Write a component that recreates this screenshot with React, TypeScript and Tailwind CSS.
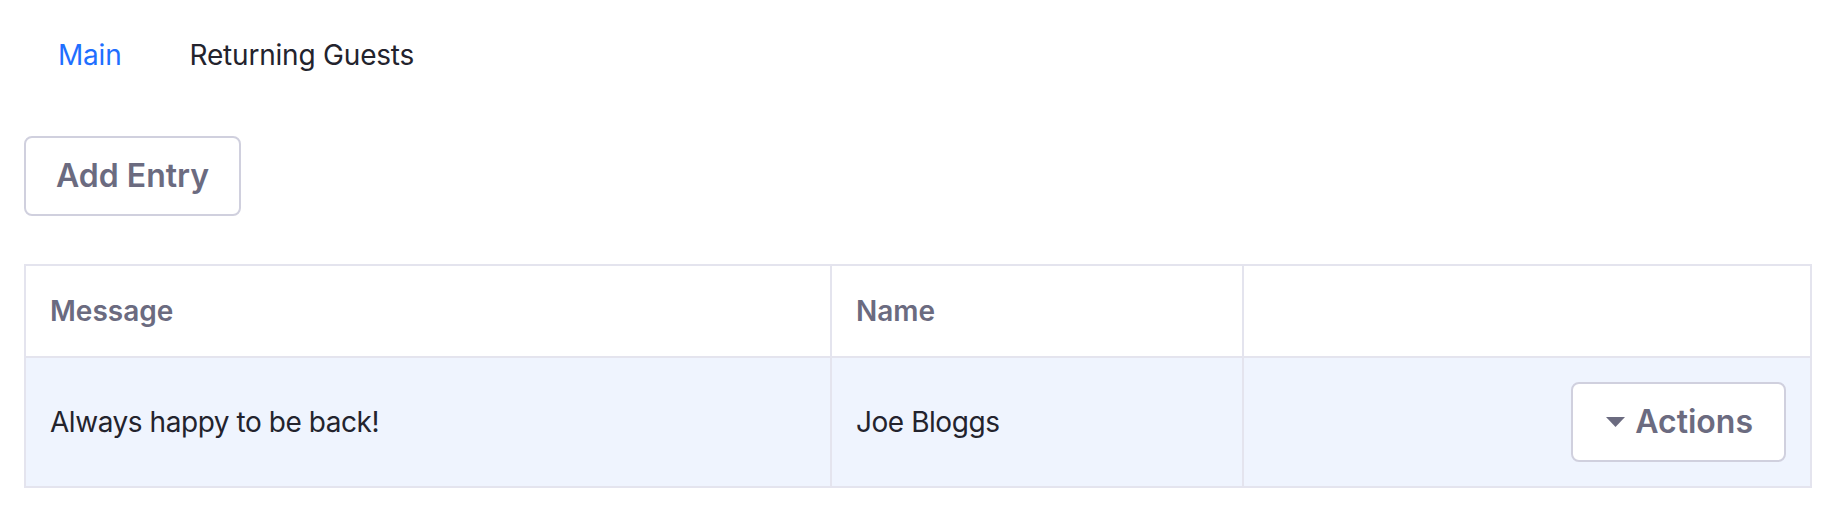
import { Fragment } from 'react'

const FONT = 'font-["Inter","Noto_Sans",sans-serif]'

const TABS = [
  { id: 'main', label: 'Main', active: true },
  { id: 'returning', label: 'Returning Guests', active: false },
]

type Entry = { message: string; name: string }

const ENTRIES: Entry[] = [{ message: 'Always happy to be back!', name: 'Joe Bloggs' }]

const BUTTON =
  'inline-flex h-[80px] items-center justify-center rounded-[8px] border-2 border-[#d0d0de] bg-white text-[32px] font-semibold text-[#6b6b80]'

const CELL = 'border-2 border-[#e4e4ee] px-6 text-left text-[28px]'

function CaretDown() {
  return (
    <svg width="19" height="10" viewBox="0 0 19 10" aria-hidden className="shrink-0">
      <path d="M0 0h19L9.5 10z" fill="#6b6b80" />
    </svg>
  )
}

function TabBar() {
  return (
    <nav className="flex">
      {TABS.map((t) => (
        <a
          key={t.id}
          href="#"
          className={`px-[34px] py-[18px] text-[28px] leading-[42px] tracking-[-0.2px] ${
            t.active ? 'text-[#1f6fff]' : 'text-[#23232d]'
          }`}
        >
          {t.label}
        </a>
      ))}
    </nav>
  )
}

export default function App() {
  return (
    <div className={`${FONT} min-h-[520px] bg-white px-6 pt-[16px] antialiased`}>
      <TabBar />
      <div className="mt-[42px]">
        <button type="button" className={`${BUTTON} px-[30px]`}>
          Add Entry
        </button>
      </div>
      <table className="mt-[48px] w-[1788px] table-fixed border-collapse border-2 border-[#e4e4ee]">
        <colgroup>
          <col className="w-[806px]" />
          <col className="w-[412px]" />
          <col />
        </colgroup>
        <thead>
          <tr className="h-[92px] bg-white">
            <th className={`${CELL} font-semibold text-[#6b6b80]`}>Message</th>
            <th className={`${CELL} font-semibold text-[#6b6b80]`}>Name</th>
            <th className="border-2 border-[#e4e4ee]" />
          </tr>
        </thead>
        <tbody>
          {ENTRIES.map((e) => (
            <Fragment key={e.name}>
              <tr className="h-[130px] bg-[#eff4fe]">
                <td className={`${CELL} tracking-[-0.45px] text-[#23232d]`}>{e.message}</td>
                <td className={`${CELL} tracking-[-0.45px] text-[#23232d]`}>{e.name}</td>
                <td className="border-2 border-[#e4e4ee] px-6 text-right">
                  <button type="button" className={`${BUTTON} gap-[10px] pl-[33px] pr-[31px]`}>
                    <CaretDown />
                    Actions
                  </button>
                </td>
              </tr>
            </Fragment>
          ))}
        </tbody>
      </table>
    </div>
  )
}
